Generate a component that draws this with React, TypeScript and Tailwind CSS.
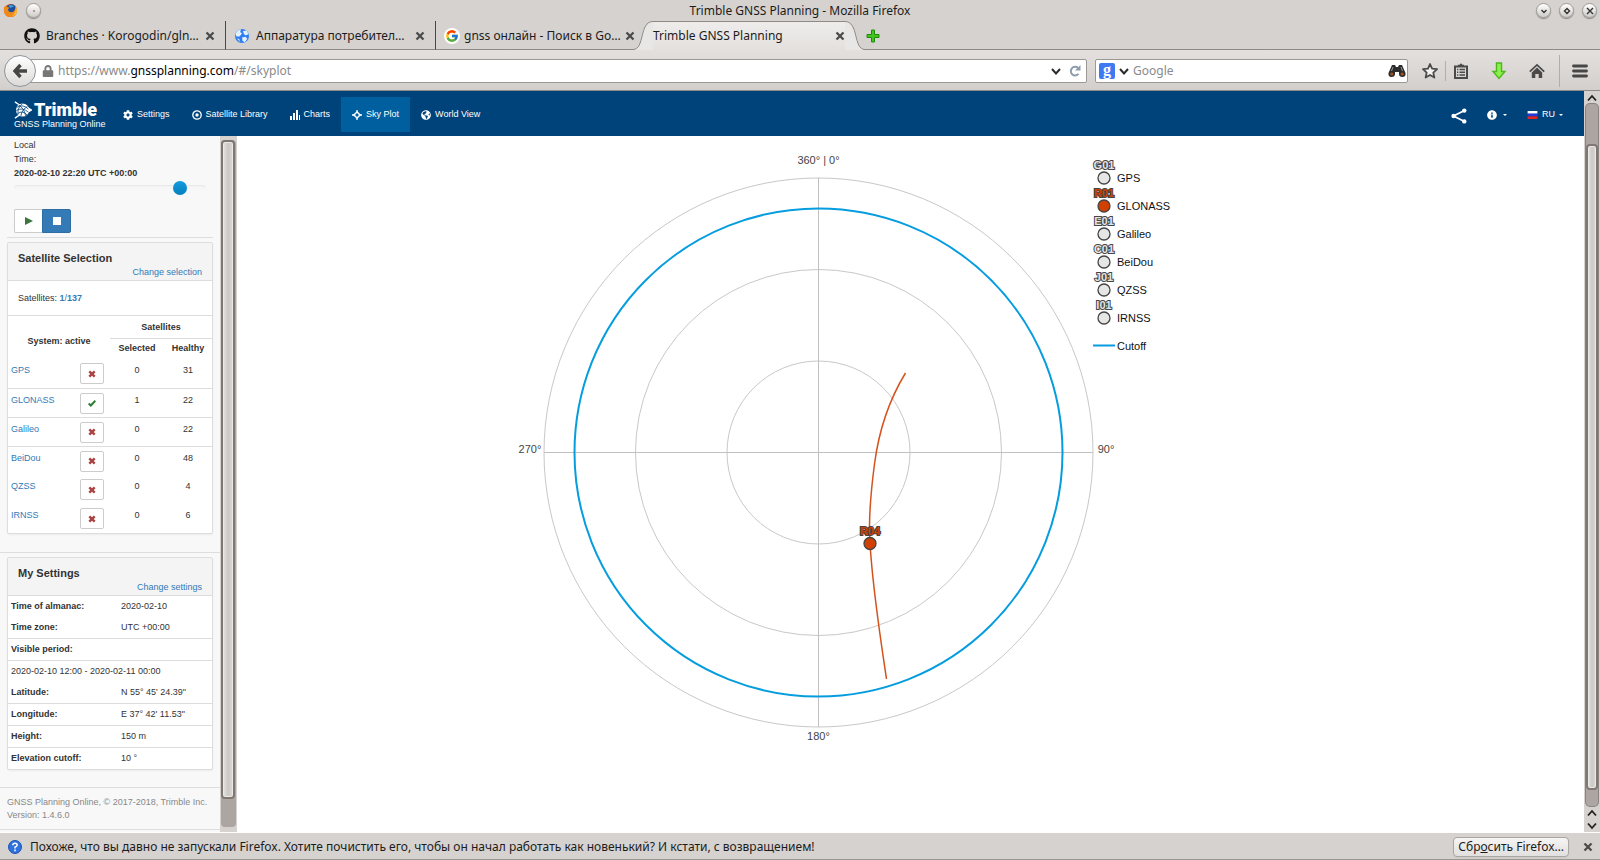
import React from "react";
import { FaCog, FaRegDotCircle, FaGlobeAmericas, FaInfoCircle, FaLock, FaHome, FaGithub } from "react-icons/fa";
import { FcGoogle } from "react-icons/fc";

const tabs = [
  { id: "github", title: "Branches · Korogodin/gln…", width: "w-[226px] gap-1.5 border-r border-r-[#4a4846] pr-2.5 pl-6" },
  { id: "globe", title: "Аппаратура потребител…", width: "w-[210px] gap-1.5 border-r border-r-[#4a4846] pr-2.5 pl-2" },
  { id: "google", title: "gnss онлайн - Поиск в Go…", width: "w-[197px] gap-1 pl-2" },
];

function Favicon({ id }: { id: string }) {
  if (id === "github") return <FaGithub className="size-4 shrink-0 text-[#111]" />;
  if (id === "google")
    return (
      <span className="flex size-4 shrink-0 items-center justify-center rounded-full bg-white">
        <FcGoogle className="size-3.5" />
      </span>
    );
  return (
    <svg viewBox="0 0 16 16" className="size-4 shrink-0">
      <circle cx="8" cy="8" r="7" fill="#2f7df0" />
      <path d="M1.5 6Q3 2 7 1.3L6.2 4 8 5.6 5.5 8.4 2.5 8.6ZM9 3l3.5-.6 2 3.6-2.6 1.6L9.8 6ZM8 9.4l3.4-.6 2 2-2.6 3.4L8.6 13ZM3 10.2l2.4 1 .4 2.8Z" fill="#e3f1ff" />
    </svg>
  );
}

function CloseMark() {
  return (
    <svg viewBox="0 0 10 10" className="size-2.5">
      <path d="M2.300 2.300 7.700 7.700M7.700 2.300 2.300 7.700" stroke="#4b4b4b" strokeWidth="2.300" strokeLinecap="square" />
    </svg>
  );
}

function WindowButton({ path, label }: { path: string; label: string }) {
  return (
    <button
      aria-label={label}
      className="flex size-[15px] items-center justify-center rounded-full border border-[#a09c98] bg-linear-to-b from-white to-[#cfcbc8] shadow-[0_1px_1px_#8a8683]"
    >
      <svg viewBox="0 0 10 10" className="size-2.5">
        <path d={path} fill="none" stroke="#333" strokeWidth="1.4" />
      </svg>
    </button>
  );
}

function TitleBar() {
  return (
    <header className="flex h-[21px] items-center px-[3px]">
      <div className="flex flex-1 items-center gap-2">
        <svg viewBox="0 0 16 16" className="size-[15px]">
          <circle cx="8" cy="8" r="7" fill="#e8651a" />
          <circle cx="8.8" cy="6.2" r="5" fill="#1d4f9e" />
          <path d="M6 3q3-2 6 1-3-.5-4 1.500Z" fill="#3fa3d8" />
          <path d="M1.200 4Q3 3.400 4 4.500q2-.6 2.600 1Q5 6 5.400 7.200 5.600 9.600 8.400 9.800q4 0 4.800-4.800Q16.500 12 10.500 14.600 4 16 1.500 11 .5 7.500 1.200 4Z" fill="#f08a1d" />
          <path d="M13.200 3.400Q16.400 8 13.400 12q-2 2-4 2 5-3 3.800-10.600Z" fill="#fbc531" />
        </svg>
        <WindowButton label="Window menu" path="M4.500 5h1" />
      </div>
      <h1 className="text-xs text-[#1c1c1c]">Trimble GNSS Planning - Mozilla Firefox</h1>
      <div className="flex flex-1 items-center justify-end gap-2">
        <WindowButton label="Minimize" path="M2.500 4 5 6.500 7.500 4" />
        <WindowButton label="Maximize" path="M5 2.500 7.500 5 5 7.500 2.500 5Z" />
        <WindowButton label="Close" path="M2 2 8 8M8 2 2 8" />
      </div>
    </header>
  );
}

function TabStrip() {
  return (
    <div className="flex h-[29px] items-stretch text-xs text-[#1c1c1c]">
      {tabs.map((t) => (
        <div key={t.id} className={t.width + " flex shrink-0 items-center border-b border-b-[#8d8a87] pt-0.5"}>
          <Favicon id={t.id} />
          <span className="flex-1 whitespace-nowrap">{t.title}</span>
          <button aria-label="Close tab">
            <CloseMark />
          </button>
        </div>
      ))}
      <svg viewBox="0 0 20 29" className="w-5 shrink-0">
        <path d="M0 28.500C12 28.500 6 .5 20 .5V29H0Z" fill="#e9e7e5" />
        <path d="M0 28.500C12 28.500 6 .5 20 .5" fill="none" stroke="#8d8a87" />
      </svg>
      <div className="flex w-[192px] items-center justify-between border-t border-[#8d8a87] bg-linear-to-b from-[#efedec] to-[#e3e0de]">
        <span>Trimble GNSS Planning</span>
        <button aria-label="Close tab">
          <CloseMark />
        </button>
      </div>
      <svg viewBox="0 0 20 29" className="w-5 shrink-0">
        <path d="M20 28.500C8 28.500 14 .5 0 .5V29H20Z" fill="#e9e7e5" />
        <path d="M20 28.500C8 28.500 14 .5 0 .5" fill="none" stroke="#8d8a87" />
      </svg>
      <div className="flex flex-1 items-center border-b border-[#8d8a87] pt-0.5">
        <button aria-label="New tab">
          <svg viewBox="0 0 16 16" className="size-4">
            <path d="M6.500 2h3v4.500H14v3H9.500V14h-3V9.500H2v-3h4.500Z" fill="#43c61a" stroke="#1f8a0c" />
          </svg>
        </button>
      </div>
    </div>
  );
}

function DownMark() {
  return (
    <svg viewBox="0 0 10 10" className="size-2.5 shrink-0">
      <path d="M1 3 5 7.500 9 3" fill="none" stroke="#2b2b2b" strokeWidth="2" />
    </svg>
  );
}

function Toolbar() {
  return (
    <div className="flex h-[41px] items-center border-b border-[#8d8a87] bg-linear-to-b from-[#e3e0de] to-[#d3cfcc] pt-px pr-3 text-xs">
      <button
        aria-label="Back"
        className="z-10 ml-1 flex size-8 shrink-0 items-center justify-center rounded-full border border-[#8d959c] bg-linear-to-b from-white to-[#dcdad8]"
      >
        <svg viewBox="0 0 16 16" className="size-4">
          <path d="M8.500 2 3 8l5.500 6M3.500 8H15" fill="none" stroke="#464646" strokeWidth="3.400" />
        </svg>
      </button>
      <div className="-ml-2 flex h-6 flex-1 items-center gap-1 rounded-r-xs border border-[#9c9894] bg-white pr-[5px] pl-[13px]">
        <FaLock className="size-3 shrink-0 text-[#777]" />
        <p className="flex-1 text-[#8a8a8a]">
          https://www.<span className="text-black">gnssplanning.com</span>/#/skyplot
        </p>
        <DownMark />
        <button aria-label="Reload" className="ml-1">
          <svg viewBox="0 0 12 12" className="size-3">
            <path d="M9.500 8.800A4.300 4.300 0 1 1 9 2.900" fill="none" stroke="#8f9dab" strokeWidth="2" />
            <path d="M11.500 0v5.500H6Z" fill="#8f9dab" />
          </svg>
        </button>
      </div>
      <div className="ml-2 flex h-6 w-[313px] items-center gap-1 rounded-xs border border-[#9c9894] bg-white pr-px pl-[3px]">
        <span className="flex size-4 shrink-0 items-center justify-center rounded-xs bg-[#3f79f2] pb-0.5 font-['Liberation_Serif',serif] text-base leading-none font-bold text-white">
          g
        </span>
        <DownMark />
        <input aria-label="Search" placeholder="Google" className="min-w-0 flex-1 bg-transparent outline-none placeholder:text-[#8a8a8a]" />
        <svg viewBox="0 0 18 14" className="h-3.5 w-[18px] shrink-0">
          <path d="M4 1h3l1 2h2l1-2h3l3.500 8q.5 4-3 4T11 10V8H7v2q0 3-3.500 3t-3-4Z" fill="#2c2c2c" />
          <circle cx="3.800" cy="10" r="1.600" fill="#a5531c" />
          <circle cx="14.200" cy="10" r="1.600" fill="#a5531c" />
          <path d="M5 3 3.500 7M13 3l1.500 4" stroke="#999" />
        </svg>
      </div>
      <button aria-label="Bookmark" className="ml-[13px]">
        <svg viewBox="0 0 18 18" className="size-[18px]">
          <path d="m9 2 2.100 4.700 5 .5-3.800 3.400 1.100 5L9 13l-4.400 2.600 1.100-5L2 7.200l5-.5Z" fill="#f3f2f1" stroke="#4a4a4a" strokeWidth="1.800" strokeLinejoin="round" />
        </svg>
      </button>
      <div className="ml-1.5 h-5 w-px bg-[#aab0b6]" />
      <button aria-label="Bookmarks list" className="ml-[7px]">
        <svg viewBox="0 0 16 16" className="size-4">
          <path d="M2 3.500h12v11.500H2Z" fill="none" stroke="#4a4a4a" strokeWidth="2" />
          <path d="M5 3V1.800h1.500L8 .3l1.500 1.500H11V4H5Z" fill="#4a4a4a" />
          <path d="M4 6.500h1.300M6.500 6.500H12M4 9.200h1.300M6.500 9.200H12M4 12h1.300M6.500 12H12" stroke="#4a4a4a" strokeWidth="1.500" />
        </svg>
      </button>
      <button aria-label="Downloads" className="ml-[22px]">
        <svg viewBox="0 0 16 18" className="h-[18px] w-4">
          <path d="M5.500 1h5v8.500H14L8 16.500 2 9.500h3.500Z" fill="#8df04e" stroke="#4bb81c" strokeWidth="1.400" />
        </svg>
      </button>
      <button aria-label="Home" className="ml-[22px]">
        <svg viewBox="0 0 16 16" className="size-4">
          <path d="M.8 8.600 8 1.800l7.200 6.800" fill="none" stroke="#4a4a4a" strokeWidth="1.700" />
          <path d="M2.800 9.500 8 4.600l5.200 4.900V15H9.700v-4H6.300v4H2.800Z" fill="#4a4a4a" />
        </svg>
      </button>
      <div className="ml-3.5 h-8 w-px bg-[#b0adaa]" />
      <button aria-label="Menu" className="ml-3">
        <svg viewBox="0 0 16 14" className="h-3.5 w-4">
          <path d="M1.500 2h13M1.500 7h13M1.500 12h13" stroke="#464646" strokeWidth="2.800" strokeLinecap="round" />
        </svg>
      </button>
    </div>
  );
}

function NavBar() {
  const item = "flex h-[35px] items-center gap-1 px-[11px]";
  return (
    <nav className="flex h-[45px] shrink-0 items-center bg-[#00437b] pt-0.5 pl-3.5 text-[9px] text-white">
      <div className="w-[98px]">
        <div className="flex h-[18px] items-center gap-0.5">
          <svg viewBox="0 0 20 20" className="size-[18px]">
            <path d="M1 1 7 5M1 19l6-4M19.500 10 16 8v4Z" stroke="#fff" strokeWidth="1.500" fill="#fff" />
            <circle cx="9.500" cy="10" r="7.300" fill="#fff" />
            <path d="M3 7q7-4 13 2M2.500 10.500q7-4 13.500 2M4 14q6-4 10.500 1.500M5 4.500q6 3 8 12M9.500 3q-6 4-5 12M15 6q-6 3-7.500 11" fill="none" stroke="#00437b" strokeWidth=".9" />
          </svg>
          <span className="font-[Roboto,sans-serif] text-lg leading-none font-black">Trimble</span>
        </div>
        <p className="leading-[10px]">GNSS Planning Online</p>
      </div>
      <a href="#/settings" className={item}>
        <FaCog className="size-2.5" />
        Settings
      </a>
      <a href="#/library" className={item}>
        <svg viewBox="0 0 10 10" className="size-2.5">
          <circle cx="5" cy="5" r="4.200" fill="none" stroke="#fff" strokeWidth="1.300" />
          <circle cx="5" cy="5" r="1.700" fill="#fff" />
        </svg>
        Satellite Library
      </a>
      <a href="#/charts" className={item}>
        <svg viewBox="0 0 10 10" className="size-2.5">
          <path d="M0 6h2v4H0ZM3 3h2v7H3ZM6 0h2v10H6ZM9 5h1v5H9Z" fill="#fff" />
        </svg>
        Charts
      </a>
      <a href="#/skyplot" className={item + " bg-[#005f9e]"}>
        <svg viewBox="0 0 10 10" className="size-2.5">
          <path d="M5 0v3.500M5 6.500V10M0 5h3.500M6.500 5H10" stroke="#fff" strokeWidth="1.300" />
          <path d="M5 1.800 8.200 5 5 8.200 1.800 5Z" fill="none" stroke="#fff" strokeWidth="1.300" />
        </svg>
        Sky Plot
      </a>
      <a href="#/world" className={item}>
        <FaGlobeAmericas className="size-2.5" />
        World View
      </a>
      <div className="flex-1" />
      <button aria-label="Share" className="mr-5 pt-0.5">
        <svg viewBox="0 0 16 16" className="size-4">
          <path d="M13.500 2.500 2.500 8l11 5.500" fill="none" stroke="#fff" strokeWidth="1.800" />
          <circle cx="13.300" cy="2.600" r="2.200" fill="#fff" />
          <circle cx="2.600" cy="8" r="2.200" fill="#fff" />
          <circle cx="13.300" cy="13.400" r="2.200" fill="#fff" />
        </svg>
      </button>
      <button aria-label="Information" className="mr-5 flex items-center gap-1.5">
        <FaInfoCircle className="size-2.5" />
        <Caret />
      </button>
      <button className="mr-[21px] flex items-center gap-1">
        <svg viewBox="0 0 11 9" className="h-2 w-[11px]">
          <path fill="#fff" d="M0 0h11v3H0Z" />
          <path fill="#2637e0" d="M0 3h11v3H0Z" />
          <path fill="#e22424" d="M0 6h11v3H0Z" />
        </svg>
        RU
        <Caret />
      </button>
    </nav>
  );
}

function Caret() {
  return (
    <svg viewBox="0 0 4 2" className="h-0.5 w-1">
      <path d="M0 0h4L2 2Z" fill="#fff" />
    </svg>
  );
}

const systems = [
  { name: "GPS", on: false, selected: 0, healthy: 31, line: true },
  { name: "GLONASS", on: true, selected: 1, healthy: 22, line: true },
  { name: "Galileo", on: false, selected: 0, healthy: 22, line: true },
  { name: "BeiDou", on: false, selected: 0, healthy: 48, line: false },
  { name: "QZSS", on: false, selected: 0, healthy: 4, line: false },
  { name: "IRNSS", on: false, selected: 0, healthy: 6, line: false },
];

const settings = [
  { label: "Time of almanac:", value: "2020-02-10", line: false },
  { label: "Time zone:", value: "UTC +00:00", line: true },
  { label: "Visible period:", line: true },
  { wide: "2020-02-10 12:00 - 2020-02-11 00:00", line: false },
  { label: "Latitude:", value: "N 55° 45' 24.39\"", line: true },
  { label: "Longitude:", value: "E 37° 42' 11.53\"", line: true },
  { label: "Height:", value: "150 m", line: true },
  { label: "Elevation cutoff:", value: "10 °", line: false },
];

function PanelHeader({ title, action }: { title: string; action: string }) {
  return (
    <div className="border-b border-[#ddd] bg-[#f4f4f4] px-2.5 pt-2 pb-px">
      <h2 className="text-[11px] leading-[14px] font-bold">{title}</h2>
      <div className="text-right leading-[14px]">
        <a href="#/settings" className="text-[#337ab7]">
          {action}
        </a>
      </div>
    </div>
  );
}

function Sidebar() {
  return (
    <aside className="w-[220px] shrink-0 overflow-hidden bg-[#f8f8f8] text-[9px] text-[#333]">
      <div className="mx-[7px] border-b border-[#ddd] px-[7px] pt-0.5 pb-1">
        <label htmlFor="time" className="block leading-[14px]">
          Local
          <br />
          Time:
          <br />
          <b>2020-02-10 22:20 UTC +00:00</b>
        </label>
        <input
          id="time"
          type="range"
          min={0}
          max={200}
          defaultValue={179}
          className="mt-px block h-3.5 w-full appearance-none bg-transparent [&::-webkit-slider-runnable-track]:h-[7px] [&::-webkit-slider-runnable-track]:rounded-sm [&::-webkit-slider-runnable-track]:bg-linear-to-b [&::-webkit-slider-runnable-track]:from-[#f3f3f3] [&::-webkit-slider-runnable-track]:to-[#f9f9f9] [&::-webkit-slider-runnable-track]:shadow-[inset_0_1px_1px_#0000000c] [&::-webkit-slider-thumb]:-mt-1 [&::-webkit-slider-thumb]:size-3.5 [&::-webkit-slider-thumb]:appearance-none [&::-webkit-slider-thumb]:rounded-full [&::-webkit-slider-thumb]:bg-linear-to-b [&::-webkit-slider-thumb]:from-[#149bdf] [&::-webkit-slider-thumb]:to-[#0480be]"
        />
        <div className="mt-3.5 flex">
          <button aria-label="Play" className="flex h-6 w-7 items-center justify-center rounded-l-xs border border-r-0 border-[#ccc] bg-white">
            <svg viewBox="0 0 8 8" className="size-2">
              <path d="M0 0 8 4 0 8Z" fill="#3c763d" />
            </svg>
          </button>
          <button aria-label="Stop" className="flex h-6 w-[29px] items-center justify-center rounded-r-xs border border-[#2e6da4] bg-[#337ab7]">
            <span className="size-2 bg-white" />
          </button>
        </div>
      </div>

      <section className="mx-[7px] mt-1 overflow-hidden rounded-xs border border-[#ddd] bg-white shadow-xs">
        <PanelHeader title="Satellite Selection" action="Change selection" />
        <p className="border-b border-[#ddd] px-2.5 leading-[34px]">
          Satellites:{" "}
          <span className="text-[#337ab7]">
            <b>1</b>/<b>137</b>
          </span>
        </p>
        <table className="w-full table-fixed border-collapse">
          <colgroup>
            <col className="w-[68px]" />
            <col className="w-[34px]" />
            <col className="w-[54px]" />
            <col />
          </colgroup>
          <thead>
            <tr className="h-[22px]">
              <th rowSpan={2} colSpan={2} className="pt-2">
                System: active
              </th>
              <th colSpan={2} className="border-b border-[#ddd] pt-px">
                Satellites
              </th>
            </tr>
            <tr className="h-[21px]">
              <th className="pb-px">Selected</th>
              <th className="pb-px">Healthy</th>
            </tr>
          </thead>
          <tbody>
            {systems.map((s) => (
              <tr key={s.name} className={s.line ? "h-[29px] border-b border-[#ddd] align-top" : "h-[29px] align-top"}>
                <td className="pt-[5px] pl-[3px]">
                  <a href="#/library" className="text-[#337ab7]">
                    {s.name}
                  </a>
                </td>
                <td className="pt-1 pl-1">
                  <button aria-label={"Toggle " + s.name} className="flex h-[21px] w-6 items-center justify-center rounded-xs border border-[#ccc] bg-white">
                    {s.on ? (
                      <svg viewBox="0 0 8 8" className="size-2">
                        <path d="M.6 4.500 2.800 6.500 7.400 1.800" fill="none" stroke="#2f7a31" strokeWidth="2" />
                      </svg>
                    ) : (
                      <svg viewBox="0 0 8 8" className="size-2">
                        <path d="M1.300 1.300 6.700 6.700M6.700 1.300 1.300 6.700" stroke="#a94442" strokeWidth="2.400" />
                      </svg>
                    )}
                  </button>
                </td>
                <td className="pt-[5px] text-center">{s.selected}</td>
                <td className="pt-[5px] text-center">{s.healthy}</td>
              </tr>
            ))}
          </tbody>
        </table>
      </section>

      <div className="mt-[18px] border-t border-[#ddd]" />
      <section className="mx-[7px] mt-1 overflow-hidden rounded-xs border border-[#ddd] bg-white shadow-xs">
        <PanelHeader title="My Settings" action="Change settings" />
        <table className="w-full table-fixed border-separate border-spacing-0">
          <colgroup>
            <col className="w-[110px]" />
            <col />
          </colgroup>
          <tbody>
            {settings.map((r) => {
              const cell = r.line ? "border-b border-[#ddd] pl-[3px] text-left leading-[21px]" : "pl-[3px] text-left leading-[21px]";
              return (
                <tr key={r.label ?? r.wide}>
                  {r.wide ? (
                    <td colSpan={2} className={cell}>
                      {r.wide}
                    </td>
                  ) : (
                    <>
                      <th className={cell}>{r.label}</th>
                      <td className={cell}>{r.value}</td>
                    </>
                  )}
                </tr>
              );
            })}
          </tbody>
        </table>
      </section>

      <footer className="mt-[17px] border-y border-[#ddd] px-[7px] pt-2 pb-[7px] leading-[13px] text-[#888]">
        <p className="whitespace-nowrap">GNSS Planning Online, © 2017-2018, Trimble Inc.</p>
        <p>Version: 1.4.6.0</p>
      </footer>
    </aside>
  );
}

function Thumb({ className }: { className: string }) {
  return (
    <div
      className={
        className + " rounded-sm border-2 border-[#7f7772] bg-linear-to-r from-[#e8e6e4] via-[#cbc8c5] to-[#dcdad8] shadow-[inset_0_0_0_1px_#ebe9e7]"
      }
    />
  );
}

function SidebarScroll() {
  return (
    <div className="flex w-[17px] shrink-0 flex-col bg-[#d6d2cf] px-px pt-1 pb-[5px]">
      <div className="flex flex-1 flex-col rounded-sm bg-[#aca5a2] pb-7">
        <Thumb className="w-3.5 flex-1" />
      </div>
    </div>
  );
}

function Chevron({ up }: { up?: boolean }) {
  return (
    <svg viewBox="0 0 10 8" className="h-2 w-2.5">
      <path d={up ? "M1 6.500 5 2l4 4.500" : "M1 1.500 5 6l4-4.500"} fill="none" stroke="#222" strokeWidth="1.800" />
    </svg>
  );
}

function PageScroll() {
  return (
    <div className="flex w-4 shrink-0 flex-col items-center bg-[#d6d2cf]">
      <div className="flex h-[13px] items-center">
        <Chevron up />
      </div>
      <div className="flex w-3 flex-1 flex-col rounded-sm bg-[#aca5a2] pt-10 pb-4 shadow-[0_0_0_1px_#8a837f]">
        <Thumb className="w-full flex-1" />
      </div>
      <div className="flex h-[26px] flex-col items-center justify-around">
        <Chevron up />
        <Chevron />
      </div>
    </div>
  );
}

const legend = [
  { code: "G01", name: "GPS", fill: "#e6e6e6" },
  { code: "R01", name: "GLONASS", fill: "#d04000" },
  { code: "E01", name: "Galileo", fill: "#e6e6e6" },
  { code: "C01", name: "BeiDou", fill: "#e6e6e6" },
  { code: "J01", name: "QZSS", fill: "#e6e6e6" },
  { code: "I01", name: "IRNSS", fill: "#e6e6e6" },
];

function Satellite({ x, y, code, fill }: { x: number; y: number; code: string; fill: string }) {
  return (
    <g stroke="#444">
      <circle cx={x} cy={y} r="6" fill={fill} strokeWidth="1.300" />
      <text x={x} y={y - 9} textAnchor="middle" fontSize="11" fontWeight="bold" fill={fill} strokeWidth="2" paintOrder="stroke">
        {code}
      </text>
    </g>
  );
}

function SkyPlot() {
  return (
    <main className="flex-1 overflow-hidden bg-white pl-[263px]">
      <svg viewBox="500 136 700 640" className="h-[640px] w-[700px]" fontFamily="'Liberation Sans', Arial, sans-serif" role="img" aria-label="Sky plot">
        <g fill="none" stroke="#c8c8c8">
          {[91.5, 183, 274.5].map((r) => (
            <circle key={r} cx="818.500" cy="452.500" r={r} />
          ))}
          <path d="M544 452.500h549M818.500 178v549" stroke="#c0c0c0" />
        </g>
        <circle cx="818.500" cy="452.500" r="244" fill="none" stroke="#069ddf" strokeWidth="2" />
        <g fill="#444" fontSize="11" textAnchor="middle">
          <text x="818.500" y="164">360° | 0°</text>
          <text x="818.500" y="740">180°</text>
          <text x="530" y="453">270°</text>
          <text x="1106" y="453">90°</text>
        </g>
        <path d="M905.500 373C886 405 878 437 874.500 464 869 506 869 530 870 543.500 873 592 880 635 886.500 679" fill="none" stroke="#d4521c" strokeWidth="1.500" />
        <Satellite x={870} y={543.5} code="R04" fill="#d04000" />
        {legend.map((l, i) => (
          <g key={l.code}>
            <Satellite x={1104} y={178 + 28 * i} code={l.code} fill={l.fill} />
            <text x="1117" y={182 + 28 * i} fontSize="11" fill="#111">
              {l.name}
            </text>
          </g>
        ))}
        <path d="M1093 345.500h22" stroke="#069ddf" strokeWidth="2" />
        <text x="1117" y="350" fontSize="11" fill="#111">
          Cutoff
        </text>
      </svg>
    </main>
  );
}

function NotificationBar() {
  return (
    <div className="flex h-7 shrink-0 items-center border-t border-b border-t-white border-b-[#999592] pt-px pr-[7px] pl-2 text-xs text-[#1c1c1c]">
      <svg viewBox="0 0 14 14" className="mr-2 size-3.5">
        <circle cx="7" cy="7" r="6.500" fill="#2f72dd" stroke="#1c55b5" />
        <path d="M4.800 5.300q0-2.100 2.200-2.100t2.200 1.900Q9.200 6.300 7 7.200v1.300M7 9.500v1.700" fill="none" stroke="#fff" strokeWidth="1.500" />
      </svg>
      <p className="flex-1">Похоже, что вы давно не запускали Firefox. Хотите почистить его, чтобы он начал работать как новенький? И кстати, с возвращением!</p>
      <button className="h-5 rounded-sm border border-[#aaa6a2] bg-linear-to-b from-[#f6f5f4] to-[#e2e0de] px-1 leading-4 shadow-xs">
        Сбр<u>о</u>сить Firefox…
      </button>
      <button aria-label="Dismiss" className="ml-3.5">
        <CloseMark />
      </button>
    </div>
  );
}

export default function App() {
  return (
    <div className="flex h-screen flex-col bg-[#d6d2cf] font-['Noto_Sans',sans-serif]">
      <TitleBar />
      <TabStrip />
      <Toolbar />
      <div className="flex min-h-0 flex-1 font-['Liberation_Sans',Arial,sans-serif]">
        <div className="flex min-w-0 flex-1 flex-col">
          <NavBar />
          <div className="flex min-h-0 flex-1">
            <Sidebar />
            <SidebarScroll />
            <SkyPlot />
          </div>
        </div>
        <PageScroll />
      </div>
      <NotificationBar />
    </div>
  );
}
